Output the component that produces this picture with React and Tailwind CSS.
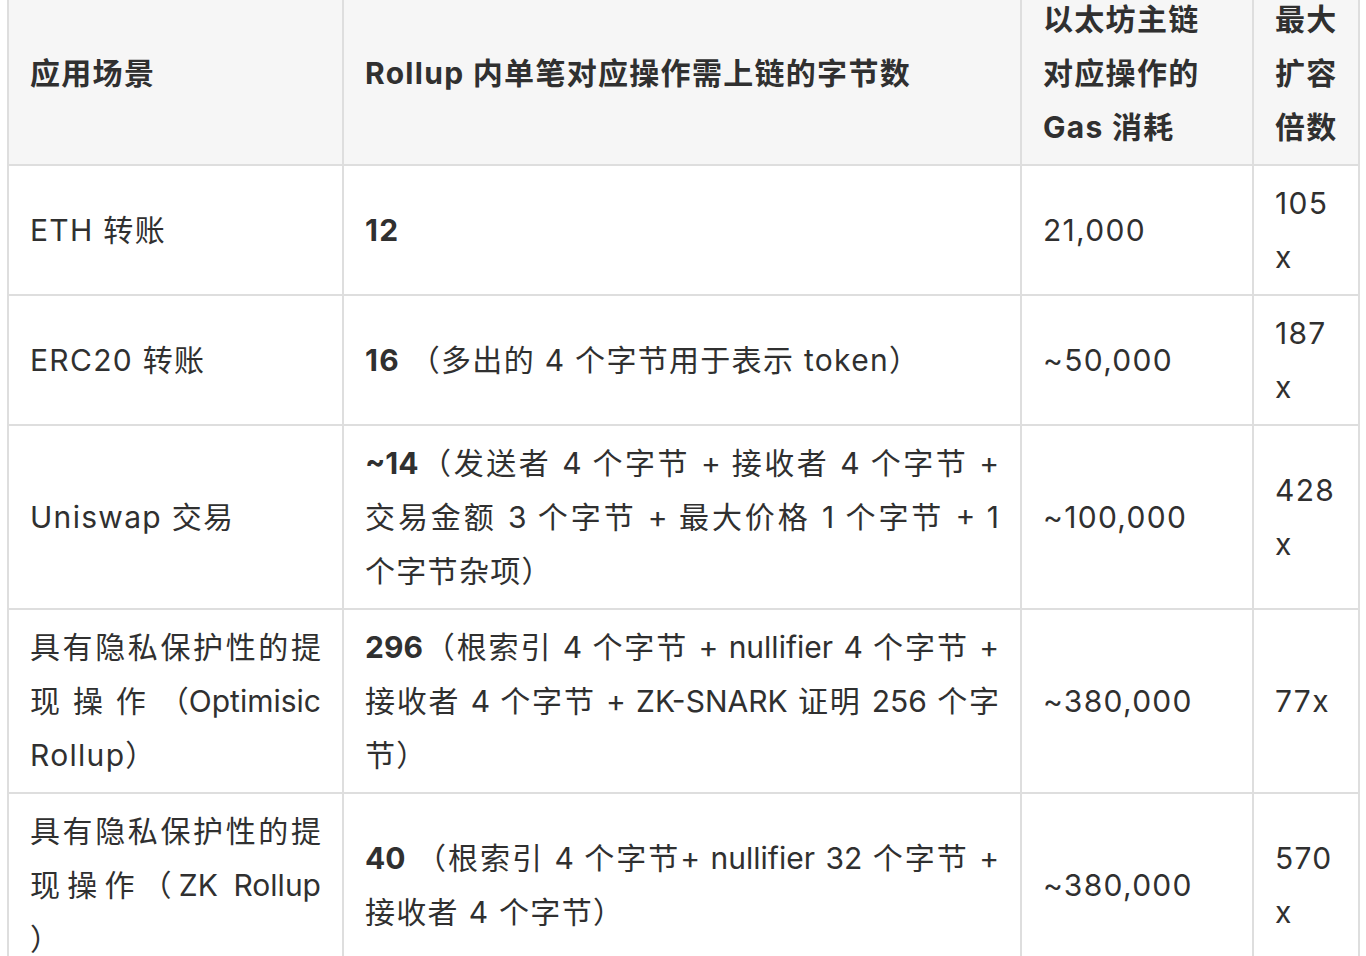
import React from "react";

const J = ({ children }) => (
  <span className="block text-justify [text-align-last:justify]">{children}</span>
);
const L = ({ children }) => (
  <span className="block whitespace-nowrap tracking-[1.3px]">{children}</span>
);

const td =
  "border-2 border-[#dedede] px-[21px] py-[10px] align-middle text-left font-normal";
const th =
  "border-2 border-[#dedede] bg-[#f6f6f6] px-[21px] py-[10px] align-middle text-left font-bold";

export default function App() {
  return (
    <div className="min-h-screen overflow-hidden bg-white font-[Inter,'Noto_Sans_CJK_SC',sans-serif] text-[#303030]">
      <table className="ml-[7px] -mt-[20px] w-[1353px] table-fixed border-collapse text-[30px] leading-[54px]">
        <colgroup>
          <col className="w-[335px]" />
          <col className="w-[678px]" />
          <col className="w-[232px]" />
          <col className="w-[106px]" />
        </colgroup>
        <thead>
          <tr>
            <th className={th}>
              <L>应用场景</L>
            </th>
            <th className={th}>
              <L>Rollup 内单笔对应操作需上链的字节数</L>
            </th>
            <th className={th}>
              <L>以太坊主链</L>
              <L>对应操作的</L>
              <L>Gas 消耗</L>
            </th>
            <th className={th}>
              <L>最大</L>
              <L>扩容</L>
              <L>倍数</L>
            </th>
          </tr>
        </thead>
        <tbody>
          <tr>
            <td className={td}>
              <L>ETH 转账</L>
            </td>
            <td className={td}>
              <L>
                <b className="font-bold">12</b>
              </L>
            </td>
            <td className={td}>
              <L>21,000</L>
            </td>
            <td className={td}>
              <L>105</L>
              <L>x</L>
            </td>
          </tr>
          <tr>
            <td className={td}>
              <L>ERC20 转账</L>
            </td>
            <td className={td}>
              <L>
                <b className="font-bold">16</b> （多出的 4 个字节用于表示 token）
              </L>
            </td>
            <td className={td}>
              <L>~50,000</L>
            </td>
            <td className={td}>
              <L>187</L>
              <L>x</L>
            </td>
          </tr>
          <tr>
            <td className={td}>
              <L>Uniswap 交易</L>
            </td>
            <td className={td}>
              <J>
                <b className="font-bold">~14</b>（发送者 4 个字节 + 接收者 4 个字节 +
              </J>
              <J>交易金额 3 个字节 + 最大价格 1 个字节 + 1</J>
              <L>个字节杂项）</L>
            </td>
            <td className={td}>
              <L>~100,000</L>
            </td>
            <td className={td}>
              <L>428</L>
              <L>x</L>
            </td>
          </tr>
          <tr>
            <td className={td}>
              <J>具有隐私保护性的提</J>
              <J>
                现操作<span className="inline-block">（Optimisic</span>
              </J>
              <L>Rollup）</L>
            </td>
            <td className={td}>
              <J>
                <b className="font-bold">296</b>（根索引 4 个字节 + nullifier 4 个字节 +
              </J>
              <J>接收者 4 个字节 + ZK-SNARK 证明 256 个字</J>
              <L>节）</L>
            </td>
            <td className={td}>
              <L>~380,000</L>
            </td>
            <td className={td}>
              <L>77x</L>
            </td>
          </tr>
          <tr>
            <td className={td}>
              <J>具有隐私保护性的提</J>
              <J>现操作（ZK Rollup</J>
              <L>）</L>
            </td>
            <td className={td}>
              <J>
                <b className="font-bold">40</b> （根索引 4 个字节+ nullifier 32 个字节 +
              </J>
              <L>接收者 4 个字节）</L>
            </td>
            <td className={td}>
              <L>~380,000</L>
            </td>
            <td className={td}>
              <L>570</L>
              <L>x</L>
            </td>
          </tr>
        </tbody>
      </table>
    </div>
  );
}
